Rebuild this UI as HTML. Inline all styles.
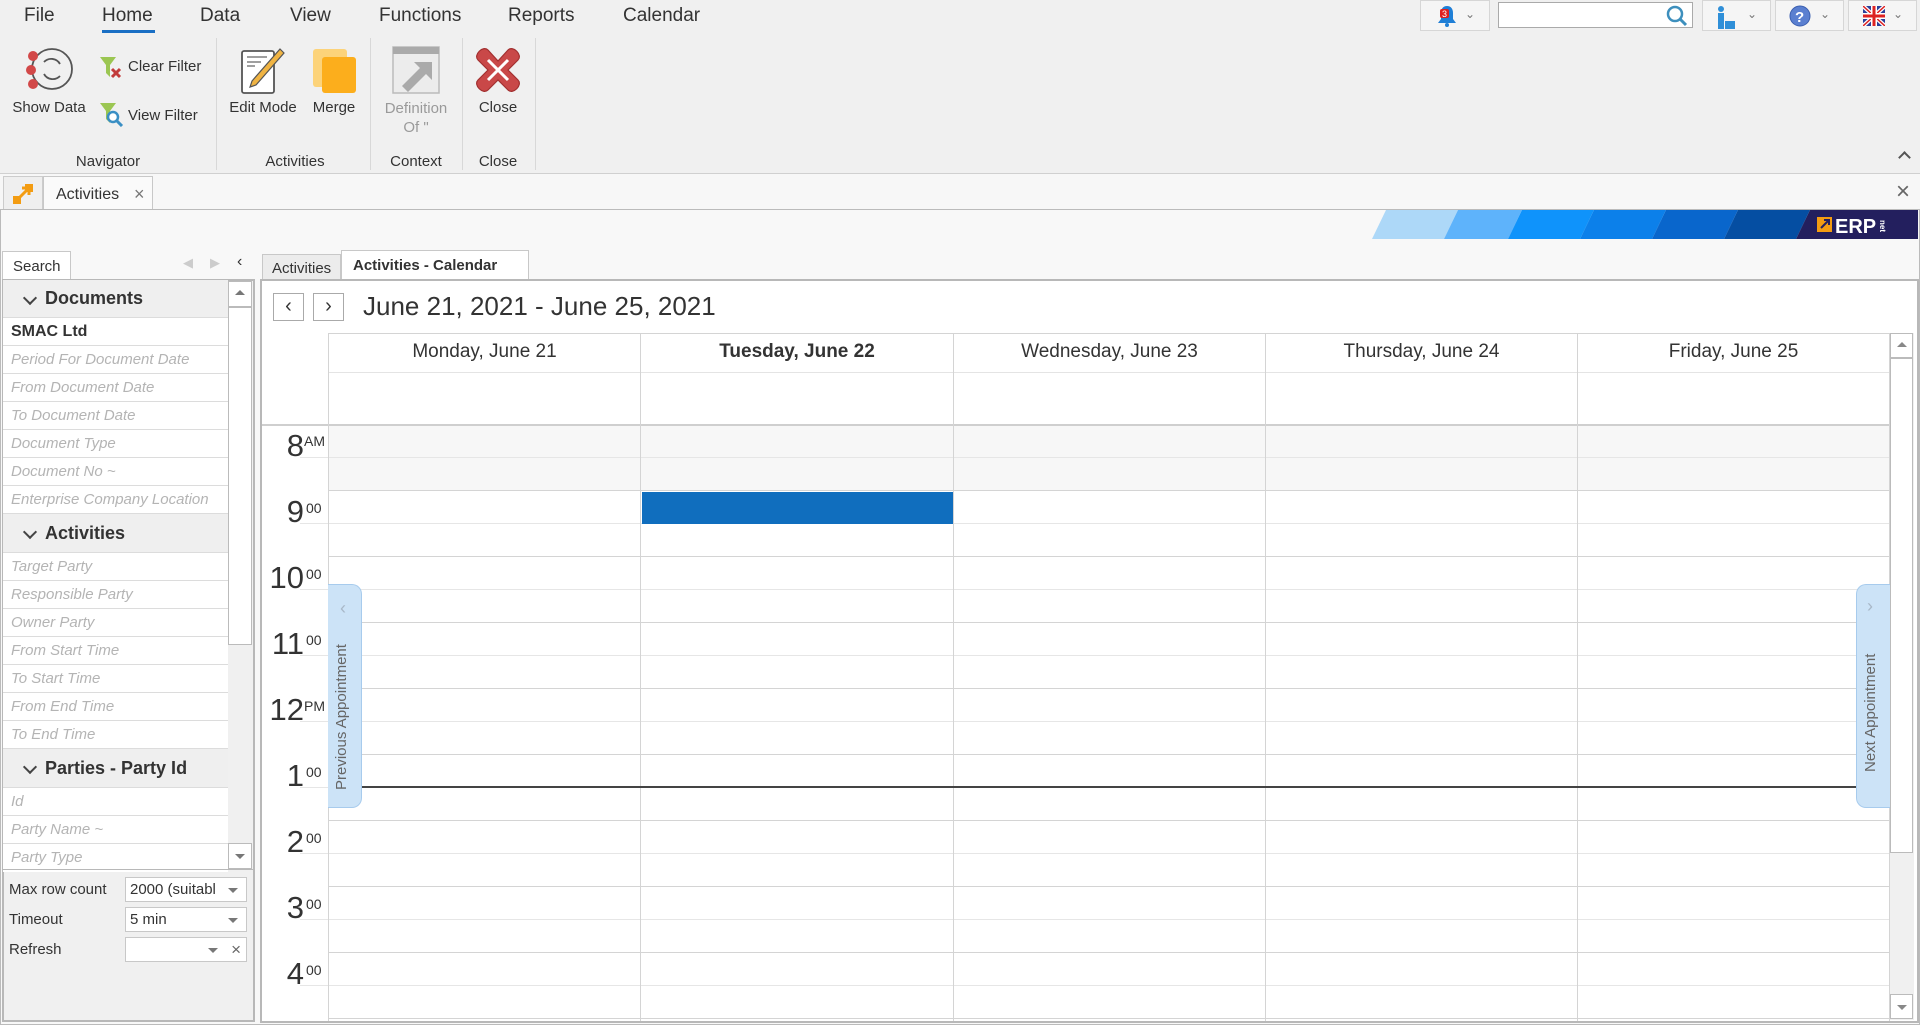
<!DOCTYPE html>
<html><head><meta charset="utf-8"><style>
*{box-sizing:border-box;margin:0;padding:0}
body{width:1920px;height:1025px;overflow:hidden;background:#f0f0f0;font-family:"Liberation Sans",sans-serif;color:#333;position:relative}
.a{position:absolute}
.menu{font-size:19px;color:#333;top:5px}
.rl{font-size:15px;color:#333;text-align:center}
.sep{width:1px;background:#d8d8d8;top:38px;height:132px}
.tb{border:1px solid #d6d6d6;background:#f5f5f5;height:31px;top:0}
.chev{color:#777;font-size:12px}
.row{left:3px;width:225px;height:28px;border-bottom:1px solid #dcdcdc;background:#fff;font-size:15px;font-style:italic;color:#b4b4b4;padding-left:8px;line-height:27px}
.hdr{left:3px;width:225px;background:#efefef;border-bottom:1px solid #dcdcdc;font-size:18px;font-weight:bold;color:#333;padding-left:42px}
.hdr::before{content:"";position:absolute;left:22px;top:13px;width:8px;height:8px;border-right:2px solid #444;border-bottom:2px solid #444;transform:rotate(45deg)}
.day{top:333px;height:39px;font-size:19px;text-align:center;line-height:38px;color:#333}
.vl{width:1px;background:#d4d4d4}
.hn{font-size:31px;color:#333;text-align:right;left:266px;line-height:32px}
.hs{font-size:14px;left:304px;color:#333}
.cmb{left:125px;width:122px;height:25px;border:1px solid #c8c8c8;background:#fff;font-size:15px;padding-left:4px;line-height:23px}
.cmb .dd{position:absolute;right:8px;top:10px;border-left:5px solid transparent;border-right:5px solid transparent;border-top:5px solid #777}
.lbl{left:9px;font-size:15px}
</style></head><body>

<!-- menu -->
<div class="a menu" style="left:24px">File</div>
<div class="a menu" style="left:102px">Home</div>
<div class="a" style="left:102px;top:30px;width:53px;height:3px;background:#1a6fc4"></div>
<div class="a menu" style="left:200px">Data</div>
<div class="a menu" style="left:290px">View</div>
<div class="a menu" style="left:379px">Functions</div>
<div class="a menu" style="left:508px">Reports</div>
<div class="a menu" style="left:623px">Calendar</div>

<!-- top right -->
<div class="a tb" style="left:1420px;width:70px">
<svg class="a" style="left:14px;top:3px" width="24" height="24" viewBox="0 0 24 24"><path d="M12 2c-4 0-6 3-6 7v6l-3 4h18l-3-4V9c0-4-2-7-6-7z" fill="#1f7fd6"/><circle cx="12" cy="21" r="2" fill="#1f7fd6"/><rect x="5" y="5" width="9" height="9" rx="2" fill="#e02020"/><text x="7" y="13" font-size="9" fill="#fff" font-family="Liberation Sans">3</text></svg>
<span class="a chev" style="left:44px;top:6px">&#8964;</span></div>
<div class="a" style="left:1498px;top:2px;width:195px;height:26px;background:#fff;border:1px solid #aaa">
<svg class="a" style="right:3px;top:1px" width="24" height="24" viewBox="0 0 24 24"><circle cx="10" cy="10" r="7" fill="none" stroke="#3d8fbd" stroke-width="2.5"/><path d="M15 15l6 6" stroke="#3d8fbd" stroke-width="3"/></svg></div>
<div class="a tb" style="left:1702px;width:69px">
<svg class="a" style="left:12px;top:4px" width="24" height="24" viewBox="0 0 24 24"><circle cx="6" cy="4" r="3" fill="#2f8fd8"/><path d="M3 8h6v16H3z" fill="#2f8fd8"/><path d="M10 16h10v8H10z" fill="#2f8fd8"/></svg>
<span class="a chev" style="left:44px;top:6px">&#8964;</span></div>
<div class="a tb" style="left:1775px;width:69px">
<svg class="a" style="left:13px;top:4px" width="22" height="22" viewBox="0 0 22 22"><circle cx="11" cy="11" r="10" fill="#5a7fd0" stroke="#3b5fb0"/><text x="6" y="17" font-size="15" font-weight="bold" fill="#fff" font-family="Liberation Sans">?</text></svg>
<span class="a chev" style="left:44px;top:6px">&#8964;</span></div>
<div class="a tb" style="left:1848px;width:69px">
<svg class="a" style="left:14px;top:5px" width="22" height="20" viewBox="0 0 22 20"><rect width="22" height="20" fill="#2a3f9a"/><path d="M0 0L22 20M22 0L0 20" stroke="#fff" stroke-width="4"/><path d="M0 0L22 20M22 0L0 20" stroke="#d22" stroke-width="1.5"/><path d="M11 0v20M0 10h22" stroke="#fff" stroke-width="6"/><path d="M11 0v20M0 10h22" stroke="#d22" stroke-width="3"/></svg>
<span class="a chev" style="left:44px;top:6px">&#8964;</span></div>

<!-- ribbon -->
<svg class="a" style="left:24px;top:46px" width="50" height="48" viewBox="0 0 50 48"><circle cx="28" cy="23" r="20" fill="none" stroke="#555" stroke-width="1.8"/><path d="M20 16a10 10 0 0 1 16 2M36 30a10 10 0 0 1-16-2" fill="none" stroke="#555" stroke-width="1.8"/><circle cx="9" cy="10" r="5" fill="#d24848"/><circle cx="7" cy="24" r="5" fill="#d24848"/><circle cx="9" cy="38" r="5" fill="#d24848"/></svg>
<div class="a rl" style="left:8px;top:99px;width:82px">Show Data</div>
<svg class="a" style="left:98px;top:55px" width="26" height="26" viewBox="0 0 26 26"><path d="M2 2h16l-6 8v12l-4-4V10z" fill="#9bc652"/><path d="M14 14l8 8M22 14l-8 8" stroke="#c23b3b" stroke-width="3"/></svg>
<div class="a rl" style="left:128px;top:58px">Clear Filter</div>
<svg class="a" style="left:98px;top:101px" width="26" height="26" viewBox="0 0 26 26"><path d="M2 2h16l-6 8v12l-4-4V10z" fill="#9bc652"/><circle cx="15" cy="16" r="5" fill="#fff" stroke="#3a8fc4" stroke-width="2.5"/><path d="M19 20l5 5" stroke="#3a8fc4" stroke-width="3"/></svg>
<div class="a rl" style="left:128px;top:107px">View Filter</div>
<div class="a rl" style="left:60px;top:153px;width:96px">Navigator</div>
<div class="a sep" style="left:216px"></div>

<svg class="a" style="left:240px;top:47px" width="46" height="48" viewBox="0 0 46 48"><rect x="2" y="4" width="32" height="42" rx="2" fill="#fff" stroke="#555" stroke-width="1.8"/><path d="M7 10h20M7 15h14M7 19h8" stroke="#666" stroke-width="1.3"/><path d="M40 2l4 4-28 32-6 2 2-6z" fill="#f0b443" stroke="#555" stroke-width="1.2"/></svg>
<div class="a rl" style="left:226px;top:99px;width:74px">Edit Mode</div>
<svg class="a" style="left:312px;top:48px" width="46" height="46" viewBox="0 0 46 46"><rect x="1" y="1" width="34" height="38" rx="3" fill="#fcd37a"/><rect x="10" y="9" width="34" height="36" rx="3" fill="#fcae1c"/></svg>
<div class="a rl" style="left:306px;top:99px;width:56px">Merge</div>
<div class="a rl" style="left:250px;top:153px;width:90px">Activities</div>
<div class="a sep" style="left:370px"></div>

<svg class="a" style="left:392px;top:46px" width="48" height="48" viewBox="0 0 48 48"><rect x="1" y="1" width="46" height="46" fill="#ececec" stroke="#bbb" stroke-width="1.5"/><rect x="1" y="1" width="46" height="7" fill="#aaa"/><path d="M10 40l18-18-6-6h18v18l-6-6-18 18z" fill="#aaa"/></svg>
<div class="a rl" style="left:376px;top:99px;width:80px;color:#9a9a9a;line-height:19px">Definition<br>Of "</div>
<div class="a rl" style="left:380px;top:153px;width:72px">Context</div>
<div class="a sep" style="left:462px"></div>

<svg class="a" style="left:474px;top:46px" width="48" height="48" viewBox="0 0 48 48"><path d="M24 15L14 4C9 -1 -1 9 4 14l10 10L4 34c-5 5 5 15 10 10l10-10 10 10c5 5 15-5 10-10L34 24 44 14c5-5-5-15-10-10z" fill="#c94848" stroke="#a23030" stroke-width="1.2"/><path d="M14 14l20 20M34 14L14 34" stroke="#fff" stroke-width="3"/></svg>
<div class="a rl" style="left:470px;top:99px;width:56px">Close</div>
<div class="a rl" style="left:470px;top:153px;width:56px">Close</div>
<div class="a sep" style="left:535px"></div>
<div class="a" style="left:1900px;top:153px;width:9px;height:9px;border-left:2px solid #555;border-top:2px solid #555;transform:rotate(45deg)"></div>

<!-- tab strip -->
<div class="a" style="left:0;top:173px;width:1920px;height:37px;background:#f7f7f7;border-top:1px solid #d0d0d0;border-bottom:1px solid #c8c8c8"></div>
<div class="a" style="left:3px;top:176px;width:40px;height:34px;background:#efefef;border:1px solid #ccc;border-bottom:none"></div>
<svg class="a" style="left:11px;top:182px" width="24" height="24" viewBox="0 0 24 24"><path d="M2 14h8v8H2z M14 2h8v8h-8z" fill="#f39c12"/><path d="M6 18L18 6M11 6h7v7" stroke="#f39c12" stroke-width="3" fill="none"/></svg>
<div class="a" style="left:43px;top:176px;width:110px;height:35px;background:#fafafa;border:1px solid #c8c8c8;border-bottom:none;font-size:16px;padding:9px 0 0 12px">Activities<span style="color:#777;position:absolute;left:90px;top:7px;font-size:18px">×</span></div>
<div class="a" style="left:1896px;top:181px;font-size:24px;color:#666;line-height:22px">×</div>

<!-- content -->
<div class="a" style="left:0;top:209px;width:1920px;height:816px;background:#f8f8f8;border:1px solid #bbb"></div>
<svg class="a" style="left:1372px;top:210px" width="546" height="29" viewBox="0 0 546 29"><polygon points="14,0 86,0 72,29 0,29" fill="#add8f8"/><polygon points="86,0 150,0 136,29 72,29" fill="#5eb3fb"/><polygon points="150,0 222,0 208,29 136,29" fill="#0f93fb"/><polygon points="222,0 294,0 280,29 208,29" fill="#0c80ea"/><polygon points="294,0 366,0 352,29 280,29" fill="#0966cc"/><polygon points="366,0 438,0 424,29 352,29" fill="#054ea2"/><polygon points="438,0 546,0 546,29 424,29" fill="#231f5e"/><rect x="445" y="7" width="15" height="15" fill="#f39c12"/><path d="M449 18l8-8M452 10h5v5" stroke="#231f5e" stroke-width="2" fill="none"/><text x="463" y="23" font-size="20" font-weight="bold" fill="#fff" font-family="Liberation Sans">ERP</text><text x="508" y="10" font-size="8" font-weight="bold" fill="#fff" font-family="Liberation Sans" transform="rotate(90 508 10)">net</text></svg>

<!-- left panel -->
<div class="a" style="left:2px;top:251px;width:69px;height:29px;background:#fff;border:1px solid #c8c8c8;border-bottom:none;font-size:15px;padding:6px 0 0 10px">Search</div>
<span class="a" style="left:183px;top:255px;color:#ccc;font-size:13px">&#9664;</span>
<span class="a" style="left:210px;top:255px;color:#ccc;font-size:13px">&#9654;</span>
<span class="a" style="left:237px;top:253px;color:#333;font-size:16px">‹</span>
<div class="a" style="left:2px;top:279px;width:253px;height:743px;background:#f0f0f0;border:2px solid #b8b8b8"></div>
<div class="a" style="left:3px;top:280px;width:225px;height:589px;background:#fff"></div>
<div class="a hdr" style="top:280px;height:38px;line-height:36px">Documents</div>
<div class="a row" style="top:318px;color:#333;font-style:normal;font-weight:bold;font-size:16px">SMAC Ltd</div>
<div class="a row" style="top:346px">Period For Document Date</div>
<div class="a row" style="top:374px">From Document Date</div>
<div class="a row" style="top:402px">To Document Date</div>
<div class="a row" style="top:430px">Document Type</div>
<div class="a row" style="top:458px">Document No ~</div>
<div class="a row" style="top:486px">Enterprise Company Location</div>
<div class="a hdr" style="top:514px;height:39px;line-height:38px">Activities</div>
<div class="a row" style="top:553px">Target Party</div>
<div class="a row" style="top:581px">Responsible Party</div>
<div class="a row" style="top:609px">Owner Party</div>
<div class="a row" style="top:637px">From Start Time</div>
<div class="a row" style="top:665px">To Start Time</div>
<div class="a row" style="top:693px">From End Time</div>
<div class="a row" style="top:721px">To End Time</div>
<div class="a hdr" style="top:749px;height:39px;line-height:38px">Parties - Party Id</div>
<div class="a row" style="top:788px">Id</div>
<div class="a row" style="top:816px">Party Name ~</div>
<div class="a row" style="top:844px;border-bottom:none">Party Type</div>
<div class="a" style="left:228px;top:281px;width:24px;height:588px;background:#f0f0f0"></div>
<div class="a" style="left:228px;top:281px;width:24px;height:26px;background:#fff;border:1px solid #bbb"><div class="a" style="left:6px;top:8px;border-left:5px solid transparent;border-right:5px solid transparent;border-bottom:5px solid #777"></div></div>
<div class="a" style="left:228px;top:307px;width:24px;height:338px;background:#fff;border:1px solid #bbb"></div>
<div class="a" style="left:228px;top:843px;width:24px;height:26px;background:#fff;border:1px solid #bbb"><div class="a" style="left:6px;top:10px;border-left:5px solid transparent;border-right:5px solid transparent;border-top:5px solid #777"></div></div>
<div class="a" style="left:3px;top:869px;width:250px;height:1px;background:#b8b8b8"></div>
<div class="a lbl" style="top:881px">Max row count</div>
<div class="a cmb" style="top:877px">2000 (suitabl<span class="dd"></span></div>
<div class="a lbl" style="top:911px">Timeout</div>
<div class="a cmb" style="top:907px">5 min<span class="dd"></span></div>
<div class="a lbl" style="top:941px">Refresh</div>
<div class="a cmb" style="top:937px"><span class="dd" style="right:28px"></span><span class="a" style="right:5px;top:0;color:#666;font-size:17px">×</span></div>

<!-- calendar tabs -->
<div class="a" style="left:262px;top:254px;width:79px;height:26px;background:#ececec;border:1px solid #c8c8c8;border-bottom:none;font-size:15px;padding:5px 0 0 9px">Activities</div>
<div class="a" style="left:341px;top:250px;width:188px;height:30px;background:#fff;border:1px solid #c8c8c8;border-bottom:none;font-size:15px;font-weight:bold;padding:6px 0 0 11px">Activities - Calendar</div>

<!-- calendar frame -->
<div class="a" style="left:260px;top:279px;width:1659px;height:744px;background:#fff;border:2px solid #b8b8b8"></div>
<div class="a" style="left:273px;top:293px;width:31px;height:28px;border:1px solid #aaa;background:#fff;font-size:20px;text-align:center;line-height:24px">‹</div>
<div class="a" style="left:313px;top:293px;width:31px;height:28px;border:1px solid #aaa;background:#fff;font-size:20px;text-align:center;line-height:24px">›</div>
<div class="a" style="left:363px;top:291px;font-size:26px;color:#333">June 21, 2021 - June 25, 2021</div>

<!-- grid -->
<div class="a" style="left:328px;top:333px;width:1561px;height:1px;background:#d4d4d4"></div>
<div class="a" style="left:328px;top:372px;width:1561px;height:1px;background:#e4e4e4"></div>
<div class="a" style="left:328px;top:425px;width:1561px;height:66px;background:#f7f7f7"></div>
<div class="a" style="left:262px;top:424px;width:1627px;height:2px;background:#cfcfcf"></div>
<div class="a" style="left:328px;top:425px;width:1561px;height:596px;background:repeating-linear-gradient(to bottom,transparent 0,transparent 32px,#e6e6e6 32px,#e6e6e6 33px,transparent 33px,transparent 65px,#d4d4d4 65px,#d4d4d4 66px)"></div>
<div class="a" style="left:300px;top:425px;width:28px;height:596px;background:repeating-linear-gradient(to bottom,transparent 0,transparent 32px,#e6e6e6 32px,#e6e6e6 33px,transparent 33px,transparent 66px)"></div>
<div class="a vl" style="left:328px;top:333px;height:688px"></div>
<div class="a vl" style="left:640px;top:333px;height:688px"></div>
<div class="a vl" style="left:953px;top:333px;height:688px"></div>
<div class="a vl" style="left:1265px;top:333px;height:688px"></div>
<div class="a vl" style="left:1577px;top:333px;height:688px"></div>
<div class="a vl" style="left:1889px;top:333px;height:688px"></div>

<div class="a day" style="left:329px;width:311px">Monday, June 21</div>
<div class="a day" style="left:641px;width:312px;font-weight:bold">Tuesday, June 22</div>
<div class="a day" style="left:954px;width:311px">Wednesday, June 23</div>
<div class="a day" style="left:1266px;width:311px">Thursday, June 24</div>
<div class="a day" style="left:1578px;width:311px">Friday, June 25</div>

<div class="a" style="left:642px;top:492px;width:311px;height:32px;background:#106ebe"></div>

<!-- hour labels -->
<div class="a hn" style="top:430px;width:38px">8</div><div class="a hs" style="top:433px">AM</div>
<div class="a hn" style="top:496px;width:38px">9</div><div class="a hs" style="top:500px;left:306px">00</div>
<div class="a hn" style="top:562px;width:38px">10</div><div class="a hs" style="top:566px;left:306px">00</div>
<div class="a hn" style="top:628px;width:38px">11</div><div class="a hs" style="top:632px;left:306px">00</div>
<div class="a hn" style="top:694px;width:38px">12</div><div class="a hs" style="top:698px">PM</div>
<div class="a hn" style="top:760px;width:38px">1</div><div class="a hs" style="top:764px;left:306px">00</div>
<div class="a hn" style="top:826px;width:38px">2</div><div class="a hs" style="top:830px;left:306px">00</div>
<div class="a hn" style="top:892px;width:38px">3</div><div class="a hs" style="top:896px;left:306px">00</div>
<div class="a hn" style="top:958px;width:38px">4</div><div class="a hs" style="top:962px;left:306px">00</div>

<!-- now line -->
<div class="a" style="left:362px;top:786px;width:1494px;height:2px;background:#444"></div>

<!-- prev / next -->
<div class="a" style="left:328px;top:584px;width:34px;height:224px;background:#cce3f7;border:1px solid #a7cbed;border-left:none;border-radius:0 10px 10px 0"></div>
<div class="a" style="left:340px;top:598px;color:#a8b8c8;font-size:18px">‹</div>
<div class="a" style="left:333px;top:798px;width:180px;height:24px;transform:rotate(-90deg);transform-origin:0 0;font-size:15px;color:#666;text-align:left;padding-left:8px">Previous Appointment</div>
<div class="a" style="left:1856px;top:584px;width:34px;height:224px;background:#cce3f7;border:1px solid #a7cbed;border-right:none;border-radius:10px 0 0 10px"></div>
<div class="a" style="left:1867px;top:596px;color:#a8b8c8;font-size:18px">›</div>
<div class="a" style="left:1862px;top:780px;width:180px;height:24px;transform:rotate(-90deg);transform-origin:0 0;font-size:15px;color:#666;padding-left:8px">Next Appointment</div>

<!-- scrollbar -->
<div class="a" style="left:1890px;top:333px;width:24px;height:687px;background:#f0f0f0"></div>
<div class="a" style="left:1890px;top:333px;width:23px;height:25px;background:#fff;border:1px solid #bbb"><div class="a" style="left:6px;top:8px;border-left:5px solid transparent;border-right:5px solid transparent;border-bottom:5px solid #888"></div></div>
<div class="a" style="left:1890px;top:358px;width:23px;height:495px;background:#fff;border:1px solid #bbb"></div>
<div class="a" style="left:1890px;top:994px;width:23px;height:25px;background:#fff;border:1px solid #bbb"><div class="a" style="left:6px;top:10px;border-left:5px solid transparent;border-right:5px solid transparent;border-top:5px solid #888"></div></div>
</body></html>
